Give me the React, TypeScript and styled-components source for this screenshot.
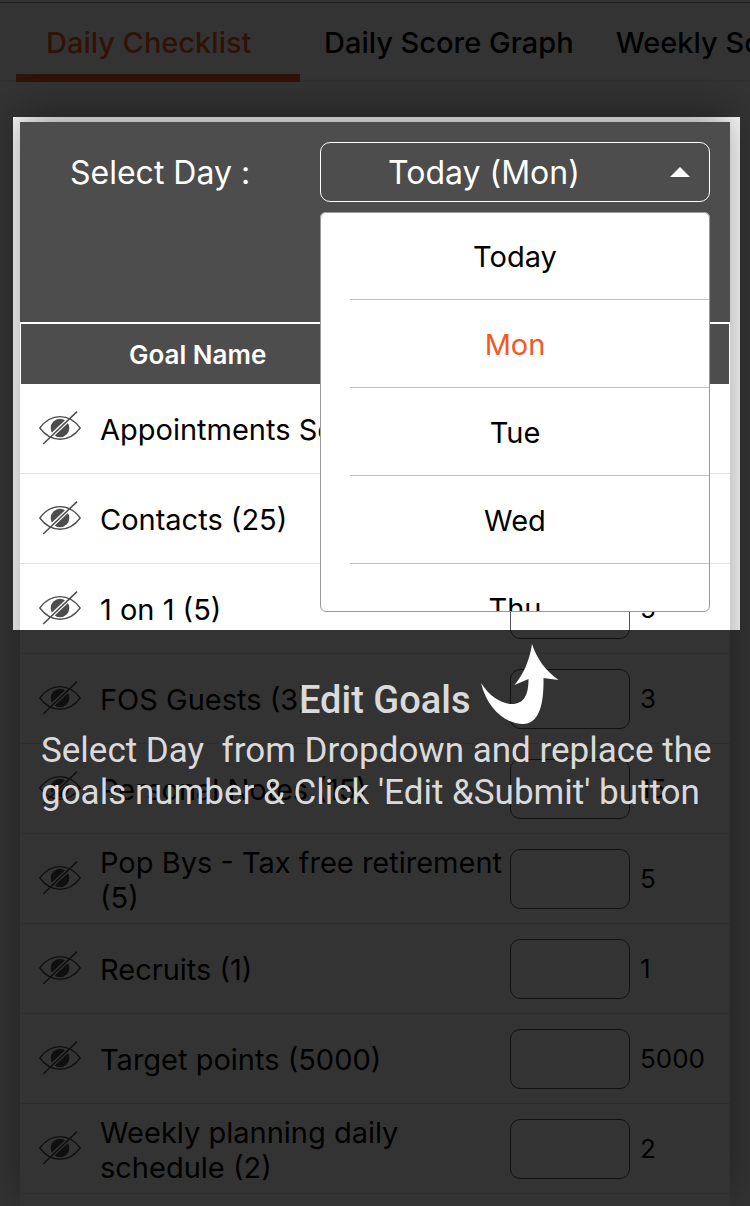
import React, { useState } from 'react';
import styled, { createGlobalStyle } from 'styled-components';

const ink = '#4d4d4d';
const accent = '#f15a24';

const GlobalStyle = createGlobalStyle`
  *, *::before, *::after { box-sizing: border-box; }
  body {
    margin: 0;
    background: #fff;
    color: #000;
    font-family: Inter, "Liberation Sans", sans-serif;
  }
  button, input { font: inherit; color: inherit; }
`;

const Page = styled.div`
  display: flex;
  flex-direction: column;
  min-height: 100vh;
  overflow: hidden;
  padding-top: 2px;
`;

const Tabs = styled.nav`
  display: flex;
  flex-shrink: 0;
  height: 80px;
  padding-left: 16px;
  border-top: 1px solid #999;
  box-shadow: inset 0 -2px 0 #eee;
  overflow: hidden;
`;

const Tab = styled.a<{ $active?: boolean }>`
  flex: none;
  min-width: 284px;
  padding: ${p => (p.$active ? '0 24px 0 30px' : '0 18px 0 24px')};
  border-bottom: 8px solid ${p => (p.$active ? accent : 'transparent')};
  color: ${p => (p.$active ? accent : '#000')};
  font-size: 29px;
  font-weight: 500;
  line-height: 80px;
  text-decoration: none;
  white-space: nowrap;
`;

const Card = styled.main`
  position: relative;
  flex: 1;
  margin: 40px 20px 0;
  background: #fff;
  box-shadow: 0 -10px 40px rgba(0, 0, 0, 0.4);
`;

const DayBar = styled.header`
  display: flex;
  align-items: flex-start;
  justify-content: space-between;
  height: 200px;
  padding: 20px 20px 0 50px;
  background: ${ink};
  color: #fff;
  font-size: 32px;
  line-height: 62px;
`;

const DayPicker = styled.div`
  position: relative;
  width: 390px;
`;

const DayButton = styled.button`
  display: flex;
  align-items: center;
  width: 100%;
  height: 60px;
  padding: 0 18px 0 0;
  border: 1px solid #fff;
  border-radius: 10px;
  background: none;
`;

const DayLabel = styled.span`
  flex: 1;
  padding: 2px 22px 0 0;
`;

const DayMenu = styled.ul`
  position: absolute;
  top: 70px;
  left: 0;
  right: 0;
  height: 400px;
  margin: 0;
  padding: 0;
  overflow: hidden;
  list-style: none;
  border-radius: 6px;
  outline: 1px solid #999;
  outline-offset: -1px;
  background: #fff;
  color: #000;
`;

const DayItem = styled.li`
  height: 88px;
  margin-left: 30px;
  border-bottom: 1px solid #c2c2c2;
`;

const DayOption = styled.button<{ $active?: boolean }>`
  width: 100%;
  height: 100%;
  padding: 2px 30px 0 0;
  border: 0;
  background: none;
  color: ${p => (p.$active ? accent : '#000')};
  font-size: 29px;
  text-align: center;
`;

const GoalTable = styled.table`
  width: 100%;
  table-layout: fixed;
  border-collapse: separate;
  border-spacing: 0;
`;

const HeadCell = styled.th`
  height: 62px;
  padding: 0 0 0 108px;
  border-top: 2px solid #fff;
  background: ${ink};
  color: #fff;
  font-size: 26px;
  font-weight: 600;
  text-align: left;
  &:first-child { border-left: 1px solid #fff; }
  &:last-child { border-right: 1px solid #fff; }
`;

const Cell = styled.td`
  height: 90px;
  padding: 0;
  border-bottom: 1px solid #e2e2e2;
  font-size: 26px;
  vertical-align: middle;
`;

const IconCell = styled(Cell)`
  padding-left: 19px;
`;

const NameCell = styled(Cell)`
  padding-top: 2px;
  font-size: 29px;
  line-height: 35px;
`;

const ValueCell = styled(Cell)`
  padding-left: 10px;
`;

const HideButton = styled.button`
  display: block;
  margin-bottom: 2px;
  padding: 0;
  border: 0;
  background: none;
`;

const GoalInput = styled.input`
  display: block;
  width: 120px;
  height: 60px;
  padding: 0 12px;
  border: 1px solid #555;
  border-radius: 10px;
  background: #fff;
`;

/* Dims the whole page except for the area that the tour step explains. */
const Spotlight = styled.div`
  position: absolute;
  top: -5px;
  left: -7px;
  right: -10px;
  height: 513px;
  box-shadow: 0 0 0 3000px rgba(0, 0, 0, 0.8);
  pointer-events: none;
`;

const Hint = styled.section`
  position: absolute;
  top: 100%;
  left: 28px;
  padding-top: 14px;
  color: #dadada;
  font-family: Roboto, "Liberation Sans", sans-serif;
`;

const HintHead = styled.div`
  display: flex;
  align-items: flex-start;
  gap: 10px;
  height: 86px;
  padding-left: 258px;
`;

const HintTitle = styled.h2`
  margin: 0;
  padding-top: 34px;
  font-size: 38px;
  font-weight: 500;
  line-height: 44px;
`;

const HintText = styled.p`
  margin: 0;
  font-size: 35px;
  line-height: 42px;
  white-space: pre;
`;

const HiddenEye = () => (
  <svg width="42" height="34" viewBox="0 0 42 34" fill="none" stroke={ink} display="block" aria-hidden="true">
    <path d="M.8 17C12 1.8 30 1.8 41.2 17 30 32 12 32 .8 17Z" strokeWidth="1.3" />
    <circle cx="21" cy="17" r="9.3" fill={ink} stroke="none" />
    <path d="M13.6 23.8 28.4 9.8" stroke="#fff" strokeWidth="4" />
    <path d="M4.2 33 38 .6" strokeWidth="1.5" />
  </svg>
);

const CurvedArrow = () => (
  <svg width="80" height="82" viewBox="0 0 80 82" fill="#fff" aria-hidden="true">
    <path d="M1 39C10 53 22 60 32 60C44 60 48.500 51 48.500 35L34.500 41C43 31 49.500 17 52 0C57 15 65 26 78.500 36L63.500 34C64 63 58 80 43 80C25 80 7 64 1 39Z" />
  </svg>
);

const days = ['Today', 'Mon', 'Tue', 'Wed', 'Thu'];

const goals = [
  { name: 'Appointments Set', target: 5 },
  { name: 'Contacts', target: 25 },
  { name: '1 on 1', target: 5 },
  { name: 'FOS Guests', target: 3 },
  { name: 'Personal Notes', target: 15 },
  { name: 'Pop Bys - Tax free retirement', target: 5 },
  { name: 'Recruits', target: 1 },
  { name: 'Target points', target: 5000 },
  { name: 'Weekly planning daily schedule', target: 2 },
];

export default function App() {
  const [day, setDay] = useState('Mon');

  return (
    <Page>
      <GlobalStyle />
      <Tabs>
        <Tab href="#checklist" $active>Daily Checklist</Tab>
        <Tab href="#daily-score">Daily Score Graph</Tab>
        <Tab href="#weekly-score">Weekly Score Graph</Tab>
      </Tabs>
      <Card>
        <DayBar>
          <span id="day-label">Select Day :</span>
          <DayPicker>
            <DayButton aria-haspopup="listbox" aria-expanded="true" aria-labelledby="day-label day-value">
              <DayLabel id="day-value">Today (Mon)</DayLabel>
              <svg width="22" height="10" viewBox="0 0 22 10" fill="#fff" aria-hidden="true">
                <path d="M1 10 11 0l10 10Z" />
              </svg>
            </DayButton>
            <DayMenu>
              {days.map(d => (
                <DayItem key={d}>
                  <DayOption $active={d === day} onClick={() => setDay(d)}>{d}</DayOption>
                </DayItem>
              ))}
            </DayMenu>
          </DayPicker>
        </DayBar>
        <GoalTable>
          <colgroup>
            <col style={{ width: 80 }} />
            <col />
            <col style={{ width: 120 }} />
            <col style={{ width: 100 }} />
          </colgroup>
          <thead>
            <tr>
              <HeadCell colSpan={2}>Goal Name</HeadCell>
              <HeadCell colSpan={2} aria-label="Score" />
            </tr>
          </thead>
          <tbody>
            {goals.map(g => (
              <tr key={g.name}>
                <IconCell>
                  <HideButton aria-label={`Hide ${g.name}`}><HiddenEye /></HideButton>
                </IconCell>
                <NameCell>{g.name} ({g.target})</NameCell>
                <Cell><GoalInput aria-label={g.name} /></Cell>
                <ValueCell>{g.target}</ValueCell>
              </tr>
            ))}
          </tbody>
        </GoalTable>
        <Spotlight>
          <Hint>
            <HintHead>
              <HintTitle>Edit Goals</HintTitle>
              <CurvedArrow />
            </HintHead>
            <HintText>
              {'Select Day  from Dropdown and replace the\ngoals number & Click \'Edit &Submit\' button'}
            </HintText>
          </Hint>
        </Spotlight>
      </Card>
    </Page>
  );
}
